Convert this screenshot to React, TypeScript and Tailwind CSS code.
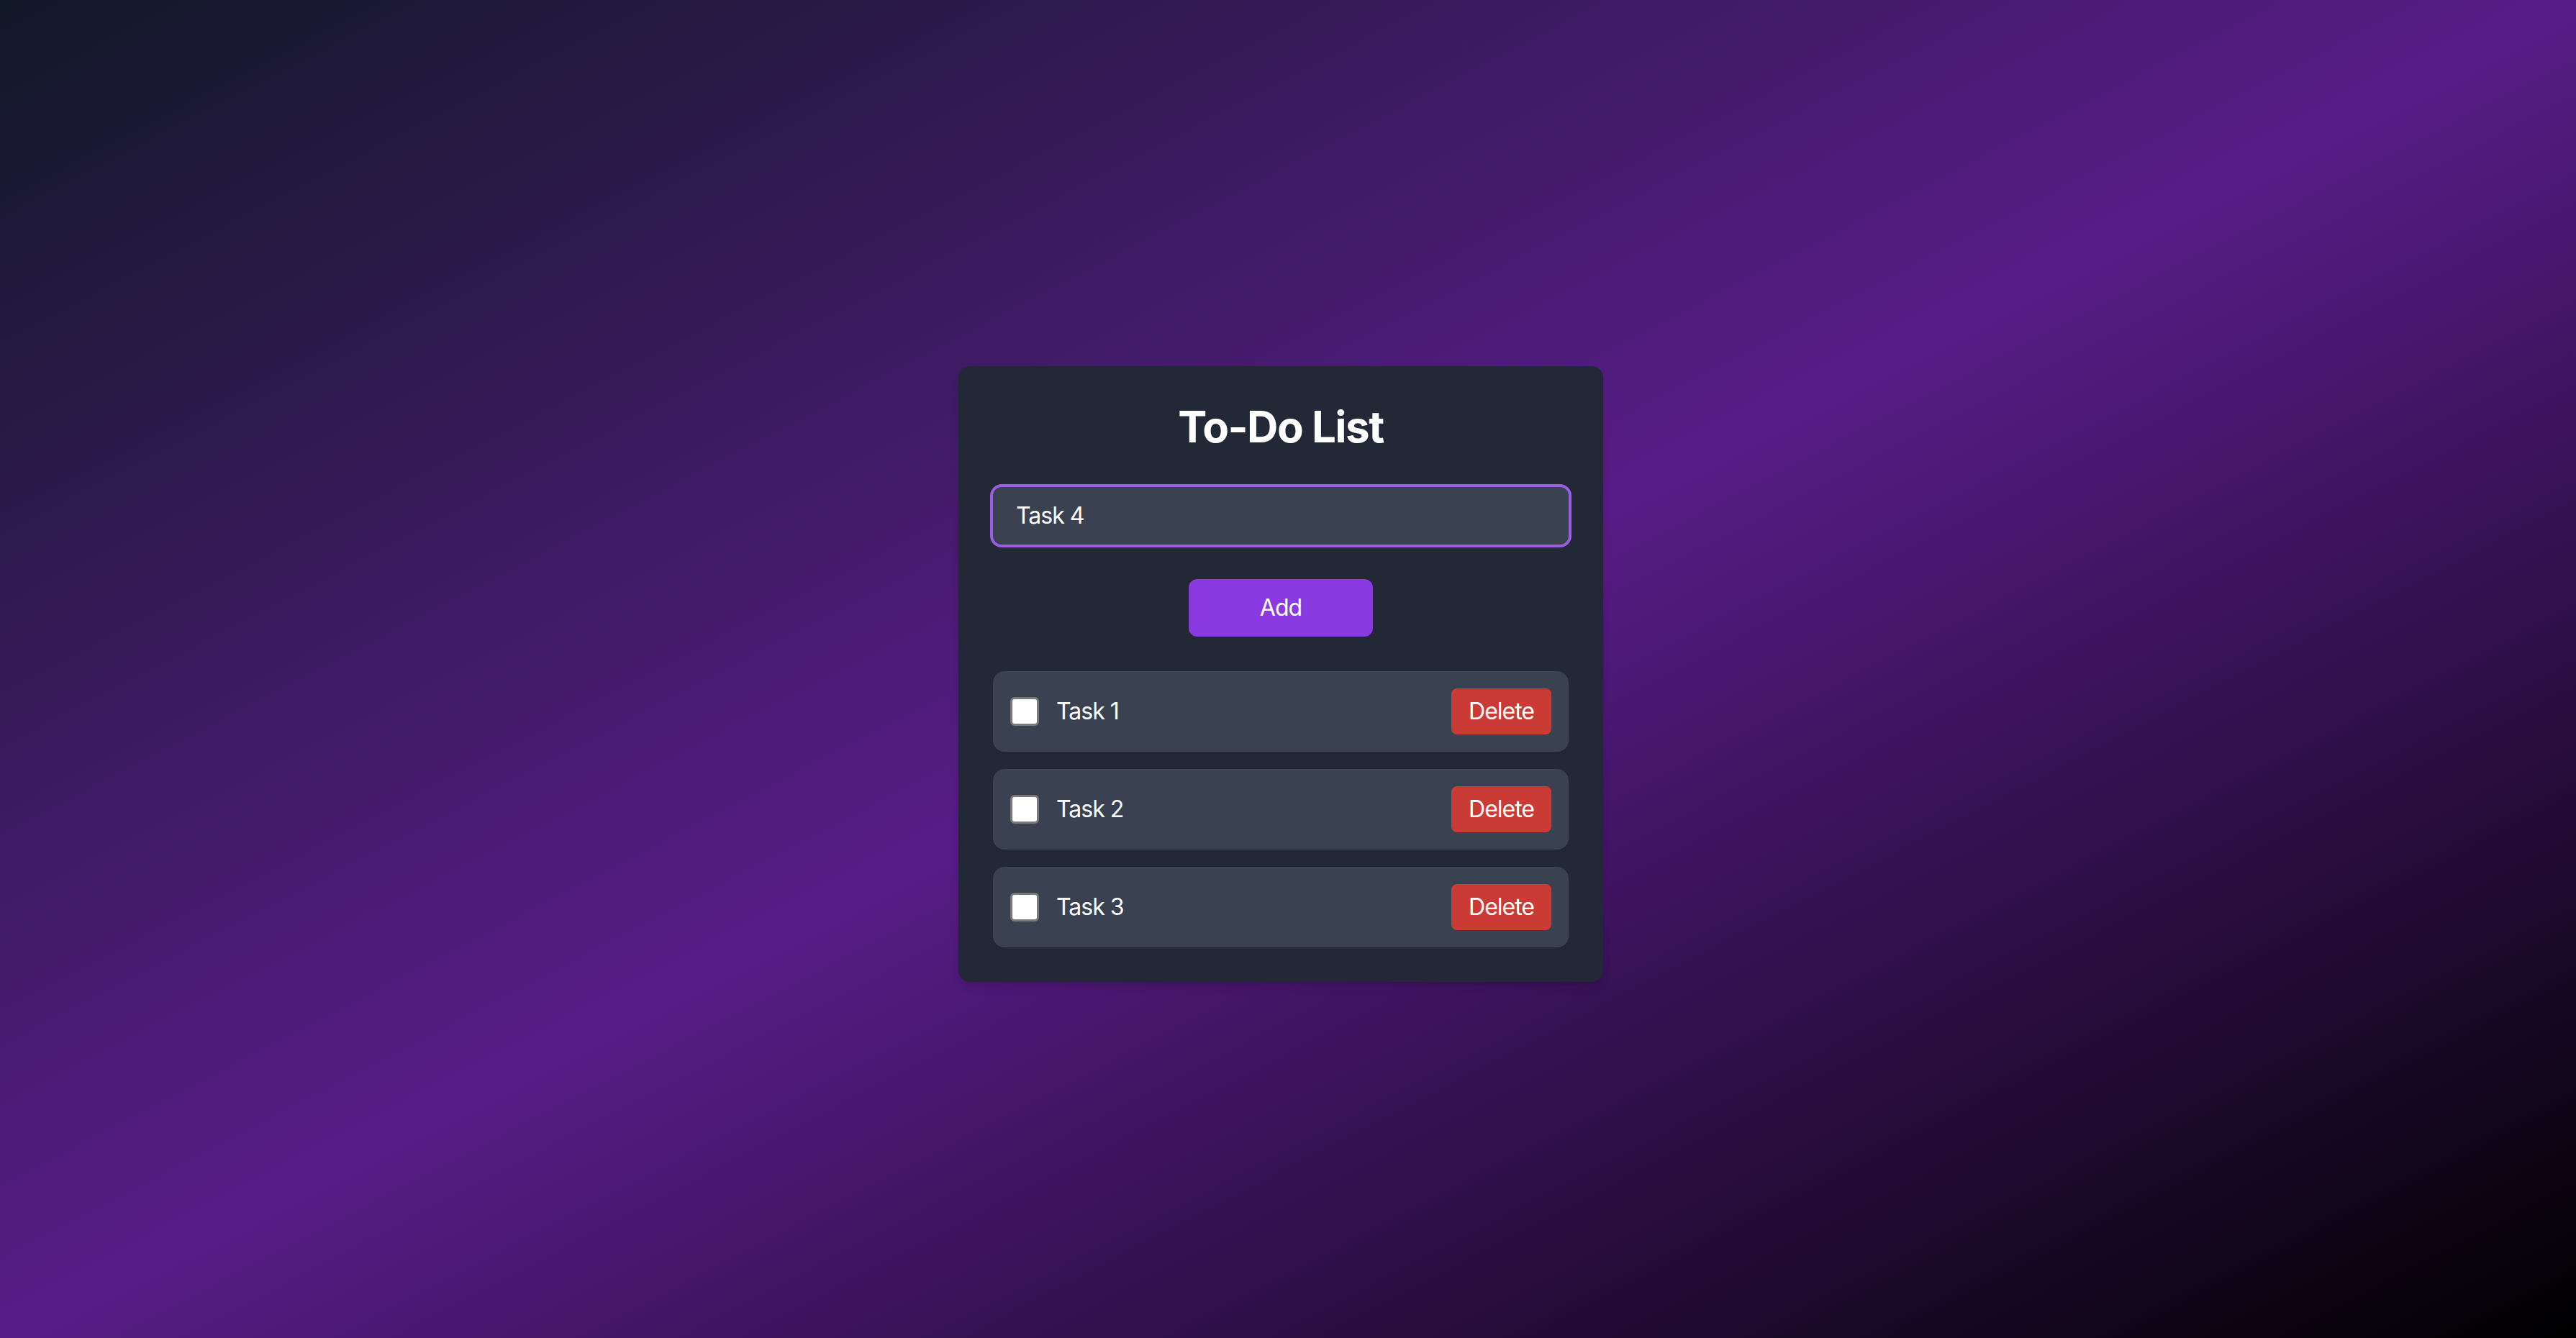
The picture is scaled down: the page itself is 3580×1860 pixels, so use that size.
import React, { useState } from 'react';

type Task = { id: number; text: string; done: boolean };

export default function App() {
  const [tasks, setTasks] = useState<Task[]>([
    { id: 1, text: 'Task 1', done: false },
    { id: 2, text: 'Task 2', done: false },
    { id: 3, text: 'Task 3', done: false },
  ]);
  const [input, setInput] = useState('Task 4');

  const addTask = () => {
    if (!input.trim()) return;
    setTasks([...tasks, { id: Date.now(), text: input, done: false }]);
    setInput('');
  };

  const toggleTask = (id: number) => {
    setTasks(tasks.map(t => (t.id === id ? { ...t, done: !t.done } : t)));
  };

  const deleteTask = (id: number) => {
    setTasks(tasks.filter(t => t.id !== id));
  };

  return (
    <div
      className="min-h-screen flex items-center justify-center pt-[13px] pr-[20px] bg-[linear-gradient(to_bottom_right,#111827,#581c87,#000000)]"
      style={{ fontFamily: 'Inter, "Noto Sans", sans-serif' }}
    >
      <div className="w-[896px] bg-[#222836] rounded-[16px] p-[48px] shadow-lg tracking-[-1px]">
        {/* Title */}
        <h1 className="text-[60px] leading-[72px] font-bold text-white text-center tracking-[-1.5px] mb-[48px]">
          To-Do List
        </h1>

        {/* Input */}
        <input
          type="text"
          value={input}
          onChange={(e) => setInput(e.target.value)}
          className="block w-full h-[80px] px-[32px] rounded-[12px] bg-[#3a4151] text-white text-[32px] tracking-[-1px] outline-none ring-4 ring-[#9b5de5]"
        />

        <div className="flex justify-center mt-[48px]">
          <button
            onClick={addTask}
            className="w-[256px] h-[80px] rounded-[12px] bg-[#8a3ae0] text-white text-[32px]"
          >
            Add
          </button>
        </div>

        {/* Tasks */}
        <ul className="mt-[48px] flex flex-col gap-[24px]">
          {tasks.map((task) => (
            <li
              key={task.id}
              className="flex items-center justify-between h-[112px] px-[24px] rounded-[16px] bg-[#3a4151]"
            >
              <div className="flex items-center">
                <input
                  type="checkbox"
                  checked={task.done}
                  onChange={() => toggleTask(task.id)}
                  className="appearance-none w-[40px] h-[40px] rounded-[6px] bg-white border-[3px] border-[#7a7a7a] checked:bg-[#8a3ae0]"
                />
                <span
                  className={
                    task.done
                      ? 'ml-[24px] text-[32px] text-gray-400 line-through'
                      : 'ml-[24px] text-[32px] text-white'
                  }
                >
                  {task.text}
                </span>
              </div>
              <button
                onClick={() => deleteTask(task.id)}
                className="h-[64px] px-[24px] rounded-[8px] bg-[#cb3b35] text-white text-[32px]"
              >
                Delete
              </button>
            </li>
          ))}
        </ul>
      </div>
    </div>
  );
}
